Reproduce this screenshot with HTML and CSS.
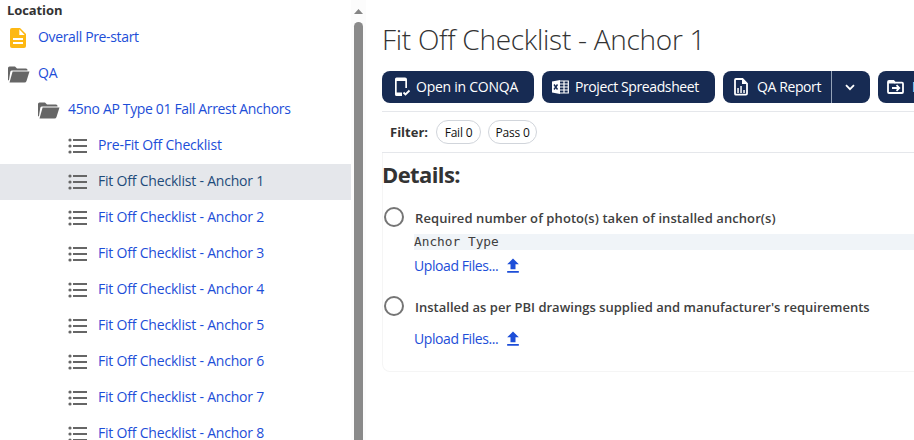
FILE: index.html
```html
<!DOCTYPE html>
<html lang="en">
<head>
<meta charset="utf-8">
<title>Fit Off Checklist - Anchor 1</title>
<link rel="stylesheet" href="styles.css">
</head>
<body>
<svg class="defs" width="0" height="0">
  <symbol id="folder" viewBox="0 0 22 17"><path d="M0 14.500V2Q0 .5 1.500 .5H7L9 2.500H18Q19.500 2.500 19.500 4V4.500H4Q2.700 4.500 2.300 5.700L1 14Z"/><path d="M4.600 5.500H21.500L18.500 15Q18 16.500 16.500 16.500H1.500Z"/></symbol>
  <symbol id="list" viewBox="0 0 20 16"><circle cx="2" cy="2" r="1.600"/><circle cx="2" cy="8" r="1.600"/><circle cx="2" cy="14" r="1.600"/><path d="M5 1h14v2H5zM5 7h14v2H5zM5 13h14v2H5z"/></symbol>
  <symbol id="upload" viewBox="0 0 24 24"><path d="M5 20h14v-2H5v2zm0-10h4v6h6v-6h4l-7-7-7 7z"/></symbol>
</svg>
<div class="app">
  <nav class="sidebar">
    <h2 class="heading">Location</h2>
    <a class="row"><svg class="doc" viewBox="0 0 16 20"><path d="M2 0H10L16 6V18Q16 20 14 20H2Q0 20 0 18V2Q0 0 2 0Z"/><path class="cut" d="M9.300 1.300V7H14.700ZM3 10h10v2H3zM3 14h10v2H3z"/></svg><span class="tight">Overall Pre-start</span></a>
    <a class="row"><svg class="folder"><use href="#folder"/></svg><span>QA</span></a>
    <a class="row level1"><svg class="folder"><use href="#folder"/></svg><span class="tight">45no AP Type 01 Fall Arrest Anchors</span></a>
    <a class="row level2"><svg class="list"><use href="#list"/></svg><span>Pre-Fit Off Checklist</span></a>
    <a class="row level2 selected"><svg class="list"><use href="#list"/></svg><span>Fit Off Checklist - Anchor 1</span></a>
    <a class="row level2"><svg class="list"><use href="#list"/></svg><span>Fit Off Checklist - Anchor 2</span></a>
    <a class="row level2"><svg class="list"><use href="#list"/></svg><span>Fit Off Checklist - Anchor 3</span></a>
    <a class="row level2"><svg class="list"><use href="#list"/></svg><span>Fit Off Checklist - Anchor 4</span></a>
    <a class="row level2"><svg class="list"><use href="#list"/></svg><span>Fit Off Checklist - Anchor 5</span></a>
    <a class="row level2"><svg class="list"><use href="#list"/></svg><span>Fit Off Checklist - Anchor 6</span></a>
    <a class="row level2"><svg class="list"><use href="#list"/></svg><span>Fit Off Checklist - Anchor 7</span></a>
    <a class="row level2"><svg class="list"><use href="#list"/></svg><span>Fit Off Checklist - Anchor 8</span></a>
  </nav>
  <div class="scrollbar"><svg class="arrow" viewBox="0 0 9 5"><path d="M4.500 0L9 5H0Z"/></svg><div class="thumb"></div></div>
  <main class="content">
    <h1 class="title">Fit Off Checklist - Anchor 1</h1>
    <div class="actions">
      <button class="btn open"><svg width="17" height="20" viewBox="0 0 17 20"><path d="M2.500 .5H11Q13 .5 13 2.500V11H11.300V4H2.700V15.500H8V19H2.500Q1 19 1 17.500V2Q1 .5 2.500 .5Z"/><path class="line" d="M9.500 15.500L11.500 17.500L15.500 13.500"/></svg><span>Open in CONQA</span></button>
      <button class="btn sheet"><svg width="17" height="16" viewBox="0 0 17 16"><path d="M0 2.500L8 1V15L0 13.500Z"/><path class="grid" d="M8 2h8.300v12H8M8 5h8M8 8h8M8 11h8M12 2v12"/><path class="ex" d="M2 5.500L5.500 10.500M5.500 5.500L2 10.500"/></svg><span>Project Spreadsheet</span></button>
      <div class="split">
        <button class="btn report"><svg width="14" height="18" viewBox="0 0 14 18"><path class="line" d="M2 1H8.500L13 5.500V15.500Q13 16.700 12 16.700H2Q1 16.700 1 15.700V2Q1 1 2 1Z"/><path d="M8 1V6H13ZM3.300 10h1.500v5H3.300zM6.300 8h1.500v7H6.300zM9.300 12h1.500v3H9.300z"/></svg><span>QA Report</span></button>
        <button class="btn more"><svg width="10" height="7" viewBox="0 0 10 7"><path class="line" d="M1 1.200L5 5.200L9 1.200"/></svg></button>
      </div>
      <button class="btn move"><svg width="17" height="14" viewBox="0 0 17 14"><path class="line" d="M1 12V2Q1 1 2 1H6.500L8 2.700H15Q16 2.700 16 3.700V12Q16 13 15 13H2Q1 13 1 12Z"/><path d="M1 1H7L8.500 3.500H1Z"/><path class="line" d="M5 8H12M9.500 5.200L12.300 8L9.500 10.800"/></svg><span>Move</span></button>
    </div>
    <div class="filters"><b>Filter:</b><span class="pill fail">Fail 0</span><span class="pill pass">Pass 0</span></div>
    <section class="details">
      <h2 class="subtitle">Details:</h2>
      <div class="item">
        <span class="radio"></span>
        <div class="body">
          <div class="question q1">Required number of photo(s) taken of installed anchor(s)</div>
          <div class="note">Anchor Type</div>
          <a class="upload"><span>Upload Files...</span><svg><use href="#upload"/></svg></a>
        </div>
      </div>
      <div class="item">
        <span class="radio"></span>
        <div class="body">
          <div class="question">Installed as per PBI drawings supplied and manufacturer's requirements</div>
          <a class="upload"><span>Upload Files...</span><svg><use href="#upload"/></svg></a>
        </div>
      </div>
    </section>
  </main>
</div>
</body>
</html>
```
FILE: styles.css
```css
* { box-sizing: border-box; }
body { margin: 0; width: 914px; height: 440px; overflow: hidden; background: #fff; color: #333; font-family: "Open Sans", "Noto Sans", sans-serif; font-size: 14px; }
h1, h2 { margin: 0; }
span, a, b, h1, h2, .question { white-space: nowrap; }
.defs { display: block; width: 0; height: 0; }
.app { display: flex; height: 440px; overflow: hidden; }
.sidebar { width: 351px; flex: none; }
.heading { height: 20px; padding-left: 7px; font-size: 13px; line-height: 20px; font-weight: 700; letter-spacing: -.1px; }
.row { display: flex; align-items: center; height: 36px; padding-left: 8px; color: #1d4ed8; letter-spacing: -.2px; }
.row span { padding-bottom: 3px; }
.row .tight { letter-spacing: -.35px; }
.level1 { padding-left: 38px; }
.level2 { padding-left: 68px; }
.selected { background: #e5e7eb; color: #1e4b7a; }
.row svg { flex: none; fill: #666; }
.row .doc { width: 16px; height: 20px; margin: 0 12px 0 2px; fill: #fdb813; }
.row .doc .cut { fill: #fff; }
.folder { width: 22px; height: 17px; margin: 0 8px 0 0; }
.list { width: 20px; height: 16px; margin-right: 10px; }
.scrollbar { width: 15px; flex: none; padding: 9px 3px 0; background: #fcfcfc; }
.arrow { display: block; width: 9px; height: 5px; fill: #858585; }
.thumb { width: 9px; height: 440px; margin-top: 8px; border-radius: 5px; background: #8a8a8a; }
.content { flex: none; width: 548px; padding-left: 16px; overflow: hidden; }
.title { height: 71px; padding-top: 19px; font-size: 28px; line-height: 40px; font-weight: 300; letter-spacing: -.28px; }
.actions { display: flex; gap: 8px; width: 700px; }
.btn { display: flex; align-items: center; flex: none; height: 32px; padding: 0 0 0 12px; border: 0; border-radius: 8px; background: #172b53; color: #fff; fill: #fff; font: 14px "Open Sans", "Noto Sans", sans-serif; letter-spacing: -.25px; }
.btn span { padding-bottom: 1px; }
.btn .line { fill: none; stroke: #fff; stroke-width: 1.8; }
.btn .grid { fill: none; stroke: #fff; stroke-width: 1.2; }
.btn .ex { stroke: #172b53; stroke-width: 1.4; }
.open { width: 152px; gap: 5px; }
.sheet { width: 173px; padding-left: 10px; gap: 6px; letter-spacing: -.4px; }
.split { display: flex; flex: none; }
.report { width: 109px; padding-left: 11px; gap: 9px; border-radius: 8px 0 0 8px; border-right: 1px solid #94a3b8; letter-spacing: -.4px; }
.more { width: 38px; padding-left: 13px; border-radius: 0 8px 8px 0; }
.move { width: 100px; padding-left: 9px; gap: 8px; }
.filters { display: flex; align-items: center; height: 42px; margin-top: 8px; padding-left: 8px; border-top: 1px solid #e5e7eb; border-bottom: 1px solid #e5e7eb; }
.filters b { width: 46px; font-size: 13px; }
.pill { height: 24px; margin-right: 7px; border: 1px solid #d1d5db; border-radius: 12px; color: #111; font-size: 12px; line-height: 23px; font-weight: 500; text-align: center; letter-spacing: -.2px; }
.fail { width: 45px; }
.pass { width: 49px; }
.details { height: 219px; width: 560px; border: 1px solid #f5f5f5; border-top: 0; border-radius: 0 0 8px 8px; }
.subtitle { height: 50px; padding-top: 5px; font-size: 22px; line-height: 32px; margin-left: -1px; letter-spacing: -.6px; }
.item { display: flex; padding-left: 1px; height: 89px; }
.radio { flex: none; width: 20px; height: 20px; margin: 4px 10px 0 0; border: 2px solid #757575; border-radius: 50%; }
.body { flex: 1; }
.question { height: 31px; padding: 5px 0 0 1px; font-size: 13px; line-height: 20px; font-weight: 600; color: #404040; letter-spacing: .01px; }
.q1 { letter-spacing: .08px; }
.note { height: 16px; background: #f0f4f8; color: #404040; font: 12.8px/15px "DejaVu Sans Mono", monospace; }
.upload { display: flex; align-items: center; height: 32px; color: #1d4ed8; letter-spacing: -.42px; }
.upload span { padding-bottom: 1px; }
.upload svg { width: 20px; height: 20px; margin-left: 5px; fill: #1d4ed8; }
```
